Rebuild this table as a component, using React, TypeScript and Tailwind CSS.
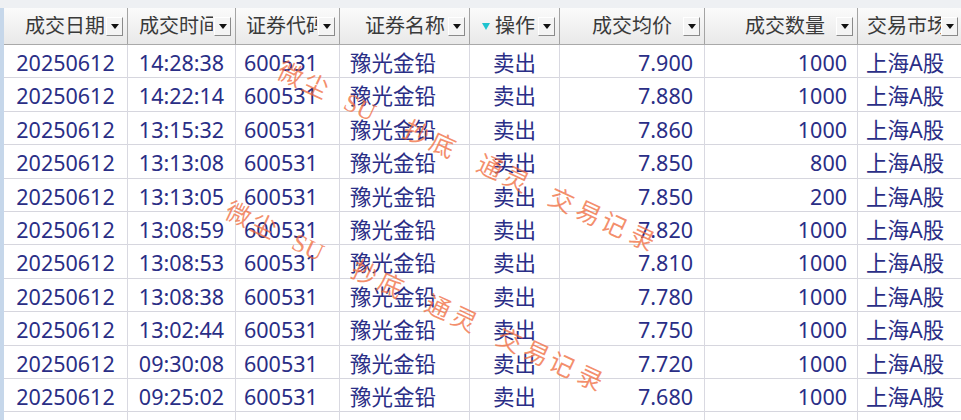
import React from "react";

type Col = {
  label: string;
  width: string;
  labelWidth?: string;
  gap: string;
  align: string;
  filter?: boolean;
};

const columns: Col[] = [
  { label: "成交日期", width: "124px", labelWidth: "w-[79px]", gap: "mr-[2px]", align: "justify-center" },
  { label: "成交时间", width: "108px", labelWidth: "w-[74px]", gap: "mr-[1px]", align: "justify-center" },
  { label: "证券代码", width: "104px", labelWidth: "w-[71px]", gap: "mr-[1px]", align: "pl-[8px]" },
  { label: "证券名称", width: "130px", gap: "mr-[3px]", align: "pl-[10px]" },
  { label: "操作", width: "90px", gap: "mr-[3px]", align: "justify-center", filter: true },
  { label: "成交均价", width: "145px", gap: "mr-[11px]", align: "justify-end pr-[11px]" },
  { label: "成交数量", width: "153px", gap: "mr-[11px]", align: "justify-end pr-[10px]" },
  { label: "交易市场", width: "105px", labelWidth: "w-[74px]", gap: "mr-0", align: "pl-[8px]" },
];

const trades: string[][] = [
  ["20250612", "14:28:38", "600531", "豫光金铅", "卖出", "7.900", "1000", "上海A股"],
  ["20250612", "14:22:14", "600531", "豫光金铅", "卖出", "7.880", "1000", "上海A股"],
  ["20250612", "13:15:32", "600531", "豫光金铅", "卖出", "7.860", "1000", "上海A股"],
  ["20250612", "13:13:08", "600531", "豫光金铅", "卖出", "7.850", "800", "上海A股"],
  ["20250612", "13:13:05", "600531", "豫光金铅", "卖出", "7.850", "200", "上海A股"],
  ["20250612", "13:08:59", "600531", "豫光金铅", "卖出", "7.820", "1000", "上海A股"],
  ["20250612", "13:08:53", "600531", "豫光金铅", "卖出", "7.810", "1000", "上海A股"],
  ["20250612", "13:08:38", "600531", "豫光金铅", "卖出", "7.780", "1000", "上海A股"],
  ["20250612", "13:02:44", "600531", "豫光金铅", "卖出", "7.750", "1000", "上海A股"],
  ["20250612", "09:30:08", "600531", "豫光金铅", "卖出", "7.720", "1000", "上海A股"],
  ["20250612", "09:25:02", "600531", "豫光金铅", "卖出", "7.680", "1000", "上海A股"],
];

// watermark glyphs, offset along the slanted line in px
const marks: [string, number][] = [
  ["微", 0], ["尘", 28], ["SU", 76], ["抄", 139], ["底", 168], ["通", 220],
  ["灵", 249], ["交", 299], ["易", 329], ["记", 357], ["录", 388],
];

function DropButton() {
  return (
    <span className="flex h-[19px] w-[17px] shrink-0 items-center justify-center border-r border-b border-[#8a8a8a] border-l border-l-white border-t border-t-white bg-[#f4f4f4]">
      <svg width="8" height="5" viewBox="0 0 8 5">
        <path d="M0 0h8L4 5z" fill="#111" />
      </svg>
    </span>
  );
}

function Watermark({ x, y }: { x: number; y: number }) {
  return (
    <div className="pointer-events-none absolute h-0 w-0 origin-top-left rotate-[25deg]" style={{ left: x, top: y }}>
      {marks.map(([ch, at]) => (
        <span
          key={ch + at}
          className="absolute top-[-15px] w-[30px] text-center text-[25px] leading-[30px] text-[#f06a3c]/75 [font-family:'Liberation_Serif','Noto_Sans_CJK_SC',serif]"
          style={{ left: at - 15 }}
        >
          {ch}
        </span>
      ))}
    </div>
  );
}

export default function App() {
  const grid = "grid grid-cols-[124px_108px_104px_130px_90px_145px_153px_105px]";

  return (
    <div className="relative h-[420px] w-[961px] overflow-hidden bg-[#eef0f3] pt-[8px] [font-family:'Noto_Sans','Noto_Sans_CJK_SC',sans-serif]">
      <div className="border-l-[4px] border-[#c6d7ea] bg-white">
        <div className={`${grid} h-[37px] border-b border-[#a9a9a9] bg-gradient-to-b from-[#fbfbfb] to-[#e9e9e9]`}>
          {columns.map((col, i) => (
            <div
              key={i}
              className="flex items-center justify-end border-r border-[#a4a4a4] pr-[4px] text-[20px] text-[#3a3a3a]"
            >
              {col.filter && (
                <svg width="8" height="7" viewBox="0 0 8 7" className="mr-[5px]">
                  <path d="M0 0h8L4 7z" fill="#1fc3cf" />
                </svg>
              )}
              <span className={`${col.labelWidth ?? ""} ${col.gap} overflow-hidden whitespace-nowrap leading-none`}>
                {col.label}
              </span>
              <DropButton />
            </div>
          ))}
        </div>

        {trades.map((row, r) => (
          <div key={r} className={`${grid} h-[33.4px] border-b border-[#d6d6de]`}>
            {row.map((cell, c) => (
              <div
                key={c}
                className={`flex items-center whitespace-nowrap border-r border-[#d9d9e1] pt-[2px] text-[21.5px] text-[#2a2e86] ${columns[c].align}`}
              >
                {cell}
              </div>
            ))}
          </div>
        ))}
        <div className={`${grid} h-[20px]`}>
          {columns.map((_, c) => (
            <div key={c} className="border-r border-[#d9d9e1]" />
          ))}
        </div>
      </div>

      <Watermark x={290} y={75} />
      <Watermark x={238} y={215} />
    </div>
  );
}
